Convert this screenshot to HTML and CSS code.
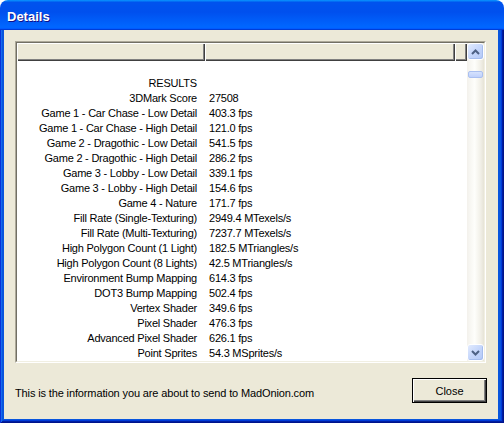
FILE: index.html
```html
<!DOCTYPE html>
<html>
<head>
<meta charset="utf-8">
<link rel="stylesheet" href="styles.css">
</head>
<body>
<div class="window">
  <div class="titlebar"><span class="title">Details</span></div>
  <div class="frame">
    <div class="client">
      <div class="listview">
        <div class="lv-inner">
          <div class="lv-main">
            <div class="header">
              <div class="hcol c1"></div>
              <div class="hcol c2"></div>
              <div class="hcol c3"></div>
            </div>
            <div class="rows">
              <div class="row"><span class="lbl">RESULTS</span><span class="val"></span></div>
              <div class="row"><span class="lbl">3DMark Score</span><span class="val">27508</span></div>
              <div class="row"><span class="lbl">Game 1 - Car Chase - Low Detail</span><span class="val">403.3 fps</span></div>
              <div class="row"><span class="lbl">Game 1 - Car Chase - High Detail</span><span class="val">121.0 fps</span></div>
              <div class="row"><span class="lbl">Game 2 - Dragothic - Low Detail</span><span class="val">541.5 fps</span></div>
              <div class="row"><span class="lbl">Game 2 - Dragothic - High Detail</span><span class="val">286.2 fps</span></div>
              <div class="row"><span class="lbl">Game 3 - Lobby - Low Detail</span><span class="val">339.1 fps</span></div>
              <div class="row"><span class="lbl">Game 3 - Lobby - High Detail</span><span class="val">154.6 fps</span></div>
              <div class="row"><span class="lbl">Game 4 - Nature</span><span class="val">171.7 fps</span></div>
              <div class="row"><span class="lbl">Fill Rate (Single-Texturing)</span><span class="val">2949.4 MTexels/s</span></div>
              <div class="row"><span class="lbl">Fill Rate (Multi-Texturing)</span><span class="val">7237.7 MTexels/s</span></div>
              <div class="row"><span class="lbl">High Polygon Count (1 Light)</span><span class="val">182.5 MTriangles/s</span></div>
              <div class="row"><span class="lbl">High Polygon Count (8 Lights)</span><span class="val">42.5 MTriangles/s</span></div>
              <div class="row"><span class="lbl">Environment Bump Mapping</span><span class="val">614.3 fps</span></div>
              <div class="row"><span class="lbl">DOT3 Bump Mapping</span><span class="val">502.4 fps</span></div>
              <div class="row"><span class="lbl">Vertex Shader</span><span class="val">349.6 fps</span></div>
              <div class="row"><span class="lbl">Pixel Shader</span><span class="val">476.3 fps</span></div>
              <div class="row"><span class="lbl">Advanced Pixel Shader</span><span class="val">626.1 fps</span></div>
              <div class="row"><span class="lbl">Point Sprites</span><span class="val">54.3 MSprites/s</span></div>
            </div>
          </div>
          <div class="scrollbar">
            <div class="sb-btn"><svg width="9" height="6" viewBox="0 0 9 6"><path d="M1 5 L4.5 1.5 L8 5" stroke="#4d6185" stroke-width="2" fill="none"/></svg></div>
            <div class="sb-track"><div class="sb-thumb"></div></div>
            <div class="sb-btn"><svg width="9" height="6" viewBox="0 0 9 6"><path d="M1 1 L4.5 4.5 L8 1" stroke="#4d6185" stroke-width="2" fill="none"/></svg></div>
          </div>
        </div>
      </div>
      <div class="footer">
        <span class="info">This is the information you are about to send to MadOnion.com</span>
        <button class="btn">Close</button>
      </div>
    </div>
  </div>
</div>
</body>
</html>
```

FILE: styles.css
```css
html, body {
  margin: 0;
  padding: 0;
  background: #ffffff;
}

.window {
  width: 504px;
  height: 423px;
  display: flex;
  flex-direction: column;
}

.titlebar {
  height: 30px;
  box-sizing: border-box;
  border-radius: 8px 8px 0 0;
  background: linear-gradient(180deg, #0997ff, #0053ee 8%, #0050ee 40%, #0066ff 88%, #0066ff 93%, #005bff 95%, #003dd7 96%, #003dd7);
  display: flex;
  align-items: center;
  padding: 3px 0 0 7px;
}

.title {
  font-family: "Liberation Sans", Arial, sans-serif;
  font-weight: bold;
  font-size: 13px;
  color: #ffffff;
  text-shadow: 1px 1px #0f1089;
}

.frame {
  flex: 1;
  display: flex;
  padding: 0 6px 4px 4px;
  background: #0855dd;
  box-shadow: inset 1px 0 #0831d9, inset -1px -1px #00138c, inset 2px 0 #166aee, inset -2px -2px #001ea0, inset 3px 0 #0855dd, inset -3px -3px #003bda;
}

.client {
  flex: 1;
  background: #ece9d8;
  padding: 11px 12px 0 11px;
  display: flex;
  flex-direction: column;
  font-family: "Liberation Sans", Arial, sans-serif;
  font-size: 11px;
  color: #000;
}

.listview {
  height: 322px;
  box-sizing: border-box;
  border: 1px solid;
  border-color: #aca899 #ffffff #ffffff #aca899;
}

.lv-inner {
  height: 100%;
  box-sizing: border-box;
  border: 1px solid;
  border-color: #716f64 #f1efe2 #f1efe2 #716f64;
  background: #ffffff;
  display: flex;
}

.lv-main {
  width: 450px;
  display: flex;
  flex-direction: column;
}

.header {
  height: 18px;
  display: flex;
  background: #ece9d8;
}

.hcol {
  height: 18px;
  box-sizing: border-box;
  box-shadow: inset 1px 1px #ffffff, inset -1px -1px #404040, inset -2px -2px #808080;
}

.c1 { width: 188px; }
.c2 { width: 250px; }
.c3 { width: 12px; }

.rows {
  flex: 1;
  padding-top: 15px;
  line-height: 15px;
  letter-spacing: -0.22px;
}

.row {
  display: flex;
  height: 15px;
  white-space: nowrap;
}

.lbl {
  width: 188px;
  box-sizing: border-box;
  text-align: right;
  padding-right: 8px;
}

.val {
  padding-left: 4px;
}

.scrollbar {
  width: 17px;
  display: flex;
  flex-direction: column;
  background: linear-gradient(90deg, #f3f1ec, #fefefb 45%, #f1efe7 80%, #e6e3d6);
}

.sb-btn {
  height: 17px;
  box-sizing: border-box;
  border: 1px solid #ffffff;
  border-radius: 3px;
  background: linear-gradient(135deg, #e2ebfe, #c5d6fb 50%, #b4c9f7);
  box-shadow: inset -1px -1px #a5bdee;
  display: flex;
  align-items: center;
  justify-content: center;
}

.sb-track {
  flex: 1;
}

.sb-thumb {
  margin: 11px 0 0 1px;
  width: 15px;
  height: 7px;
  box-sizing: border-box;
  border-radius: 2px;
  border: 1px solid #a9bff0;
  background: linear-gradient(180deg, #d6e2fd, #bfd1fb);
}

.footer {
  margin-top: 15px;
  height: 25px;
  display: flex;
  align-items: center;
  justify-content: space-between;
}

.info {
  padding: 5px 0 0 0;
  letter-spacing: -0.13px;
}

.btn {
  width: 75px;
  height: 25px;
  margin-right: -1px;
  padding: 0;
  font-family: "Liberation Sans", Arial, sans-serif;
  font-size: 11px;
  color: #000;
  background: #ece9d8;
  border: 1px solid #000000;
  box-shadow: inset 1px 1px #ffffff, inset -1px -1px #404040, inset -2px -2px #808080;
}
```
